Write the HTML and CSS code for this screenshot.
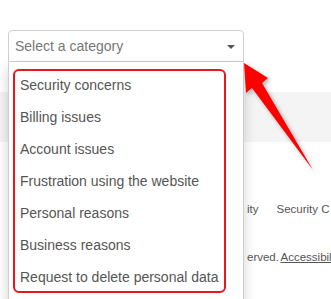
FILE: index.html
```html
<!DOCTYPE html>
<html>
<head>
<meta charset="utf-8">
<link rel="stylesheet" href="styles.css">
</head>
<body>
<div class="page">
  <div class="hero">
    <div class="picker">
      <div class="select">Select a category<span class="caret"></span></div>
      <div class="menu">
        <ul class="options">
          <li>Security concerns</li>
          <li>Billing issues</li>
          <li>Account issues</li>
          <li>Frustration using the website</li>
          <li>Personal reasons</li>
          <li>Business reasons</li>
          <li>Request to delete personal data</li>
        </ul>
      </div>
    </div>
  </div>
  <div class="band"></div>
  <div class="footer">
    <div class="links"><span>ity</span><span>Security C</span></div>
    <div class="legal">erved. <a href="#">Accessibility</a></div>
  </div>
  <svg class="arrow" width="331" height="299" viewBox="0 0 331 299">
    <polygon points="244,63 268,78 262,83 313,170 252,88 246,93" fill="#ff0000"/>
  </svg>
</div>
</body>
</html>
```
FILE: styles.css
```css
html, body {
  margin: 0;
  padding: 0;
  background: #fff;
}
.page {
  position: relative;
  width: 331px;
  height: 299px;
  overflow: hidden;
  font-family: "Liberation Sans", Arial, sans-serif;
}
.hero {
  height: 92px;
  box-sizing: border-box;
  padding: 30px 0 0 8px;
}
.picker {
  position: relative;
  width: 236px;
  z-index: 2;
}
.select {
  box-sizing: border-box;
  height: 32px;
  border: 1px solid #cfcfcf;
  border-radius: 4px 4px 0 0;
  background: #fff;
  display: flex;
  align-items: center;
  justify-content: space-between;
  padding: 0 8px 0 6px;
  font-size: 14px;
  color: #777;
}
.caret {
  width: 0;
  height: 0;
  border-left: 4px solid transparent;
  border-right: 4px solid transparent;
  border-top: 4px solid #555;
  margin-top: 2px;
}
.menu {
  position: absolute;
  top: 32px;
  left: 0;
  width: 236px;
  height: 260px;
  box-sizing: border-box;
  background: #fff;
  border: 1px solid #cfcfcf;
  border-top: none;
  box-shadow: 0 6px 12px rgba(0,0,0,0.175);
  padding: 7px 0 0 4px;
}
.options {
  list-style: none;
  margin: 0;
  padding: 0;
  width: 213px;
  box-sizing: border-box;
  border: 2px solid #e8161d;
  border-radius: 6px;
}
.options li {
  height: 32px;
  line-height: 28px;
  padding-left: 5px;
  font-size: 14px;
  color: #555;
  white-space: nowrap;
}
.options li:last-child {
  height: 28px;
}
.band {
  height: 50px;
  background: #f4f4f4;
}
.footer {
  padding-left: 247px;
  font-size: 11.5px;
  color: #555;
  white-space: nowrap;
}
.links {
  margin-top: 59px;
  line-height: 16px;
  display: flex;
  gap: 18px;
}
.legal {
  margin-top: 32px;
  line-height: 16px;
  word-spacing: -1px;
}
.legal a {
  color: #555;
  text-decoration: underline;
}
.arrow {
  position: absolute;
  left: 0;
  top: 0;
  z-index: 3;
  filter: drop-shadow(2px 2px 2px rgba(0,0,0,0.3));
}
```
